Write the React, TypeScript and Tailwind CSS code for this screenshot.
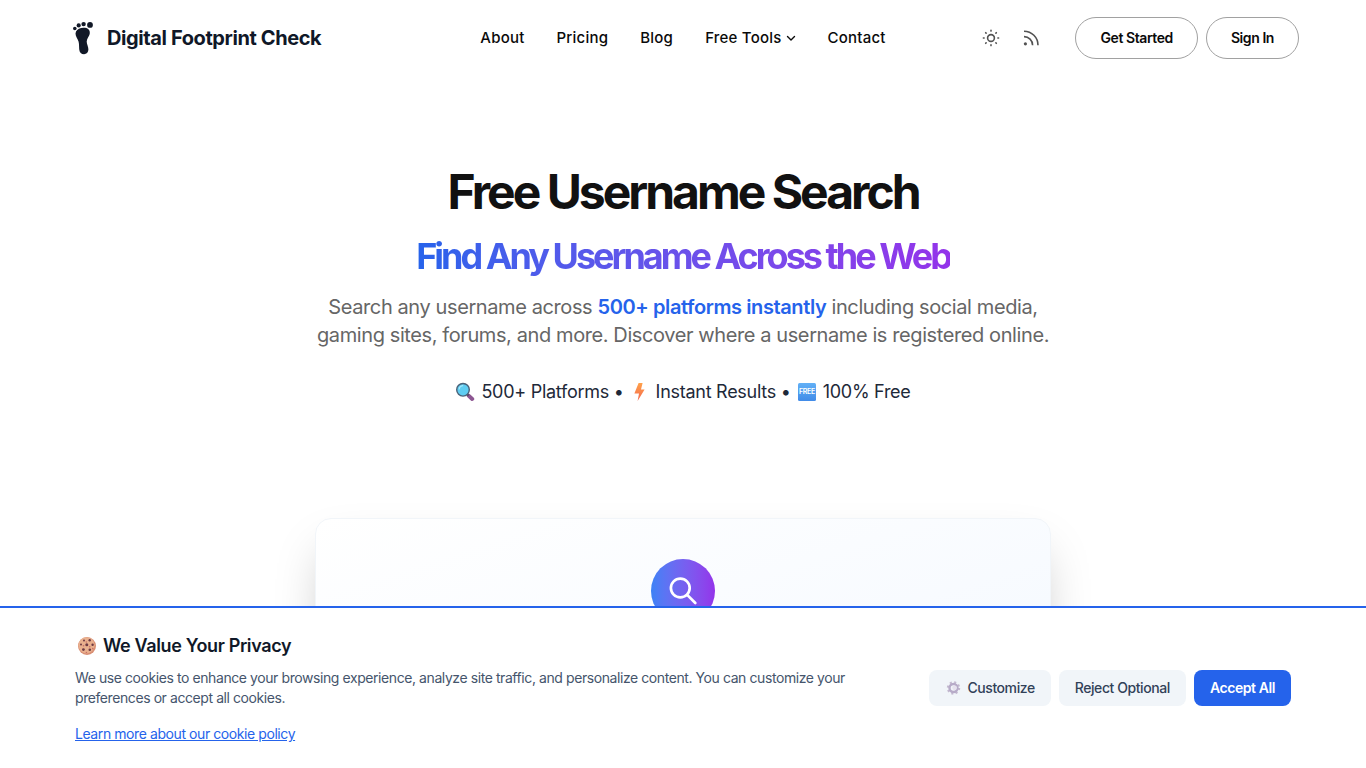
import { type ReactNode } from 'react'

const navLinks = ['About', 'Pricing', 'Blog', 'Free Tools', 'Contact']

function FootprintIcon() {
    return (
        <svg viewBox="0 0 32 40" className="h-10 w-8" fill="#111827" aria-hidden="true">
            <circle cx="7.800" cy="10.500" r="1.800" />
            <circle cx="11.700" cy="7.400" r="2.100" />
            <circle cx="16.600" cy="6.100" r="2.200" />
            <circle cx="23" cy="6.900" r="2.900" />
            <path d="M9 13.600C10.400 10.900 14 9.300 18 9.800c3.900.5 5.300 3.200 4.700 6.200-.5 2.500-2.900 4.500-3 7.500-.1 2.800 1.900 5.300 1.700 8.300-.2 2.800-1.900 4.400-4.300 4.400-2.800 0-4.600-1.700-4.900-5-.3-4.200.2-6.600-1.500-9.700C9.300 18.900 7.700 16.300 9 13.600z" />
        </svg>
    )
}

function SunIcon() {
    return (
        <svg viewBox="0 0 20 20" className="size-5" fill="none" stroke="currentColor" strokeWidth="1.600" strokeLinecap="round" aria-hidden="true">
            <circle cx="10" cy="10" r="3.400" />
            <path d="M10 2.400v.7M10 16.900v.7M2.400 10h.7M16.900 10h.7M4.700 4.700l.4.4M14.900 14.900l.4.4M4.700 15.300l.4-.4M14.900 5.100l.4-.4" />
        </svg>
    )
}

function RssIcon() {
    return (
        <svg viewBox="0 0 20 20" className="size-5" fill="none" stroke="currentColor" strokeWidth="1.600" aria-hidden="true">
            <path d="M3 3.200a14 14 0 0 1 14 14M3 8.600a8.600 8.600 0 0 1 8.600 8.600" />
            <circle cx="4.400" cy="15.800" r="1.600" fill="currentColor" stroke="none" />
        </svg>
    )
}

function ChevronIcon() {
    return (
        <svg viewBox="0 0 10 10" className="size-[10px]" fill="none" stroke="currentColor" strokeWidth="1.400" strokeLinecap="round" strokeLinejoin="round" aria-hidden="true">
            <path d="M1.500 3.400 5 6.900l3.500-3.500" />
        </svg>
    )
}

function MagnifierEmoji() {
    return (
        <svg viewBox="0 0 20 20" className="size-5" aria-hidden="true">
            <path d="m13.600 13.600 3.600 3.400" stroke="#8d5692" strokeWidth="4" strokeLinecap="round" />
            <path d="m11.600 11.600 2 2" stroke="#514b60" strokeWidth="2" />
            <circle cx="8" cy="7.800" r="6.300" fill="#5fcdf2" stroke="#4a6178" strokeWidth="1.400" />
            <path d="M4.200 7a4 4 0 0 1 3.500-3.300" stroke="#a4e8fb" strokeWidth="1.200" strokeLinecap="round" fill="none" />
        </svg>
    )
}

function BoltEmoji() {
    return (
        <svg viewBox="0 0 20 20" className="size-5" aria-hidden="true">
            <defs>
                <linearGradient id="bolt" x1="0" y1="0" x2="0" y2="1">
                    <stop stopColor="#ffa24a" />
                    <stop offset="1" stopColor="#f4684f" />
                </linearGradient>
            </defs>
            <path d="M8.600 1h4l-1.600 6.600h3.600L7.600 19l1.400-7.600H4.400z" fill="url(#bolt)" />
        </svg>
    )
}

function FreeEmoji() {
    return (
        <svg viewBox="0 0 20 20" className="size-5" aria-hidden="true">
            <defs>
                <linearGradient id="free" x1="0" y1="0" x2="0" y2="1">
                    <stop stopColor="#62b0f6" />
                    <stop offset="1" stopColor="#418be8" />
                </linearGradient>
            </defs>
            <rect x="1" y="1" width="18" height="18" rx="1.500" fill="url(#free)" />
            <text x="10" y="12.300" fill="#fff" fontSize="7" fontWeight="600" textAnchor="middle">
                FREE
            </text>
        </svg>
    )
}

function CookieEmoji() {
    return (
        <svg viewBox="0 0 20 20" className="size-5" aria-hidden="true">
            <circle cx="10" cy="10" r="9" fill="#d98f74" />
            <circle cx="9.500" cy="9.300" r="8.100" fill="#e9b08e" />
            <g fill="#6d3a44">
                <circle cx="7" cy="4.400" r="1" />
                <circle cx="12.700" cy="4.300" r="1.200" />
                <circle cx="4" cy="8.600" r="1" />
                <circle cx="9.800" cy="8.800" r="1.500" />
                <circle cx="15.600" cy="8.800" r="1.200" />
                <circle cx="6.400" cy="13.600" r="1.400" />
                <circle cx="12.800" cy="13.800" r="1.300" />
            </g>
            <g fill="#c96f66">
                <circle cx="9.300" cy="6" r=".8" />
                <circle cx="6.500" cy="9.800" r=".8" />
                <circle cx="12.700" cy="10.700" r=".8" />
                <circle cx="15.800" cy="12.600" r=".8" />
                <circle cx="9.400" cy="16.500" r=".8" />
            </g>
        </svg>
    )
}

function GearEmoji() {
    return (
        <svg viewBox="0 0 16 16" className="size-4" fill="none" aria-hidden="true">
            <circle cx="8.500" cy="8" r="5.600" stroke="#c3b9cf" strokeWidth="2.200" strokeDasharray="2 2.400" />
            <circle cx="8.500" cy="8" r="4" stroke="#b7abc8" strokeWidth="2.400" />
            <circle cx="9.600" cy="7.800" r="2.400" fill="#e6e2ee" />
        </svg>
    )
}

function Stat({ icon, children }: { icon: ReactNode; children: ReactNode }) {
    return (
        <li className="flex items-center gap-x-[6px]">
            {icon}
            <span>{children}</span>
        </li>
    )
}

function Header() {
    return (
        <header className="mx-auto grid w-full max-w-7xl grid-cols-[1fr_auto_1fr] items-center px-6 py-[17px]">
            <a href="#" className="flex items-center gap-x-2 text-xl font-bold tracking-[-0.02em] text-gray-900">
                <FootprintIcon />
                Digital Footprint Check
            </a>
            <nav className="flex items-center gap-x-8 text-[15px] font-medium tracking-[0.015em] text-neutral-950">
                {navLinks.map((link) => (
                    <a key={link} href="#" className="flex items-center gap-x-1">
                        {link}
                        {link === 'Free Tools' && <ChevronIcon />}
                    </a>
                ))}
            </nav>
            <div className="flex items-center justify-end text-neutral-600">
                <button aria-label="Toggle theme" className="p-[10px]">
                    <SunIcon />
                </button>
                <a href="#" aria-label="RSS feed" className="mr-6 p-[10px]">
                    <RssIcon />
                </a>
                <div className="flex gap-x-2 text-sm font-semibold tracking-[-0.03em] text-neutral-950">
                    <button className="h-[42px] rounded-full border border-neutral-400 px-6">Get Started</button>
                    <button className="h-[42px] rounded-full border border-neutral-400 px-6">Sign In</button>
                </div>
            </div>
        </header>
    )
}

function Hero() {
    return (
        <section className="mx-auto flex max-w-3xl flex-col items-center px-4 pt-[92px] text-center">
            <h1 className="text-5xl leading-[48px] font-bold tracking-[-3px] text-[#111]">
                Free Username Search
            </h1>
            <h2 className="mt-5 bg-linear-to-r from-[#2563eb] to-[#9333ea] bg-clip-text text-4xl font-bold tracking-[-3px] text-transparent">
                Find Any Username Across the Web
            </h2>
            <p className="mt-[17px] text-xl leading-7 tracking-[-0.02em] text-[#666]">
                Search any username across{' '}
                <strong className="font-semibold text-[#2563eb]">500+ platforms instantly</strong> including
                social media, gaming sites, forums, and more. Discover where a username is registered online.
            </p>
            <ul className="mt-[29px] flex items-center gap-x-[6px] text-lg leading-7 tracking-[-0.015em] text-gray-800">
                <Stat icon={<MagnifierEmoji />}>500+ Platforms •</Stat>
                <Stat icon={<BoltEmoji />}>Instant Results •</Stat>
                <Stat icon={<FreeEmoji />}>100% Free</Stat>
            </ul>
        </section>
    )
}

function SearchCard() {
    return (
        <section className="mx-auto max-w-3xl px-4 pt-28">
            <div className="flex h-60 flex-col items-center rounded-2xl border border-slate-100 bg-linear-to-br from-white to-[#f3f8ff] pt-10 shadow-2xl">
                <span className="flex size-16 items-center justify-center rounded-full bg-linear-to-r from-[#3b82f6] to-[#9333ea]">
                    <svg viewBox="0 0 32 32" className="size-8" fill="none" stroke="#fff" strokeWidth="2.700" strokeLinecap="round" aria-hidden="true">
                        <circle cx="13.300" cy="13" r="9.400" />
                        <path d="m20.200 19.900 8.100 8.100" />
                    </svg>
                </span>
            </div>
        </section>
    )
}

function CookieBanner() {
    return (
        <aside className="fixed inset-x-0 bottom-0 z-40 border-t-2 border-[#2563eb] bg-white">
            <div className="mx-auto flex max-w-7xl items-center justify-between px-8 py-6 text-sm tracking-[-0.03em]">
                <div className="max-w-[800px]">
                    <h3 className="flex items-center gap-x-[6px] pl-[2px] text-lg leading-7 font-semibold tracking-[-0.02em] text-gray-900">
                        <CookieEmoji />
                        We Value Your Privacy
                    </h3>
                    <p className="mt-2 text-slate-600">
                        We use cookies to enhance your browsing experience, analyze site traffic, and personalize
                        content. You can customize your preferences or accept all cookies.
                    </p>
                    <a href="#" className="mt-4 block w-fit text-[#2563eb] underline">
                        Learn more about our cookie policy
                    </a>
                </div>
                <div className="flex gap-x-2 font-medium text-slate-700">
                    <button className="flex h-9 items-center gap-x-[6px] rounded-lg bg-slate-100 px-4">
                        <GearEmoji />
                        Customize
                    </button>
                    <button className="h-9 rounded-lg bg-slate-100 px-4">Reject Optional</button>
                    <button className="h-9 rounded-lg bg-[#2563eb] px-4 font-semibold text-white">Accept All</button>
                </div>
            </div>
        </aside>
    )
}

export default function App() {
    return (
        <div className="bg-white font-[Inter,sans-serif]">
            <Header />
            <main>
                <Hero />
                <SearchCard />
            </main>
            <CookieBanner />
        </div>
    )
}
